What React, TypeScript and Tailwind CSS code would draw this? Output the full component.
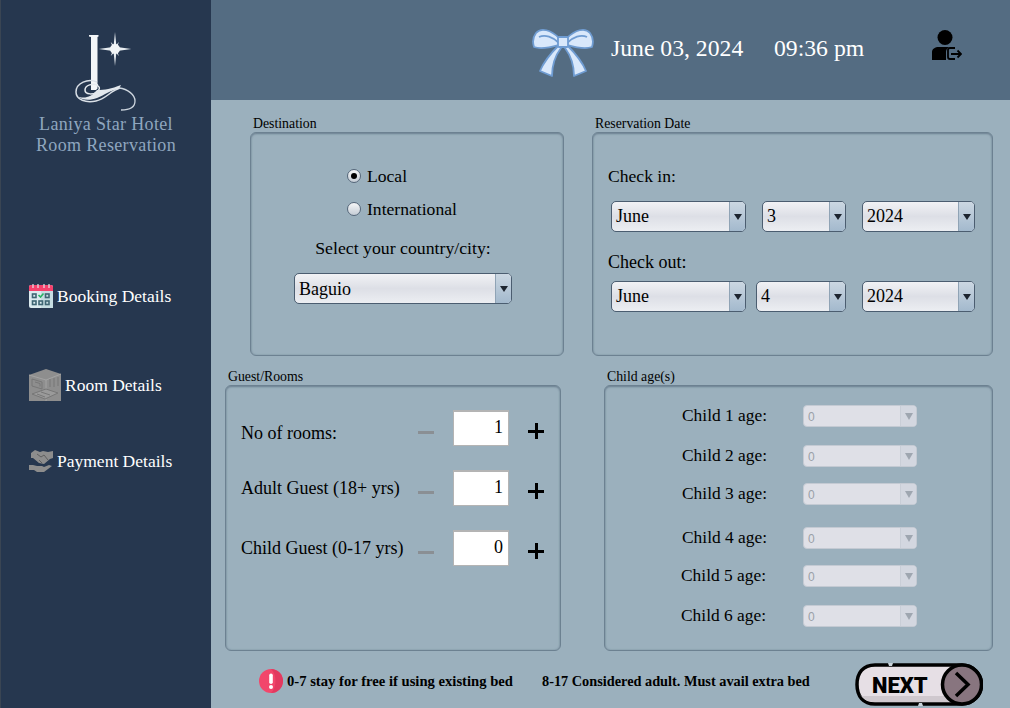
const serif = "font-['Liberation_Serif',serif]"

function LogoMark() {
  return (
    <svg viewBox="72 30 66 84" className="h-[84px] w-[66px]">
      <path d="M88 35h9.500v1.500l-1 .5v51.500l-1.500 1.500h-5V37l-2-.5z" fill="#f4f6f8" />
      <path d="M114 32l1.300 13 2.500-3-1.500 5 14 2-14 2 1.500 5-2.500-3-1.300 13-1.300-13-3 3 2-5-14-2 14-2-2-5 3 3z" fill="#e9eef2" />
      <circle cx="114" cy="49" r="5" fill="#f1f4f6" />
      <path d="M96 82c-9-4-21 1-21 10 0 8 10 11 20 9 10-2 14-10 24-13" fill="none" stroke="#d9dfe6" strokeWidth="1.500" />
      <path d="M97 85c-5-2-13 0-13 5 0 5 9 5 13 1 3-3 1-5-2-6" fill="none" stroke="#e6eaee" strokeWidth="1.500" />
      <path d="M96 90c8 0 14-1 24-5l-2 4c-9 1-14 6-22 9-8 3-16 2-20-2 6 3 14 2 20-6z" fill="#e3e8ed" />
      <path d="M118 88c9 1 16 7 16 13 0 6-5 9-14 9" fill="none" stroke="#cdd5de" strokeWidth="1.300" />
    </svg>
  )
}

function CalendarIcon() {
  return (
    <svg viewBox="0 0 24 24" className="h-6 w-6 shrink-0">
      <rect x="0" y="1" width="24" height="23" rx="2" fill="#dcebef" />
      <rect x="12" y="6" width="12" height="18" fill="#c6dde2" />
      <path d="M0 7V3a2 2 0 0 1 2-2h20a2 2 0 0 1 2 2v4z" fill="#f6416c" />
      <path d="M4 0v4M9 0v4M15 0v4M20 0v4" stroke="#e3e6ea" strokeWidth="1.200" />
      <g fill="none" stroke="#3f6674" strokeWidth="1.600">
        <rect x="3.500" y="10" width="3.500" height="3.500" />
        <rect x="16.500" y="10" width="3.500" height="3.500" />
        <rect x="3.500" y="17" width="3.500" height="3.500" />
        <rect x="10" y="17" width="3.500" height="3.500" />
        <rect x="16.500" y="17" width="3.500" height="3.500" />
      </g>
      <path d="M9.500 11l2 2 3-3.500" fill="none" stroke="#28b463" strokeWidth="1.600" />
    </svg>
  )
}

function RoomIcon() {
  return (
    <svg viewBox="0 0 32 32" className="h-8 w-8 shrink-0">
      <path d="M0 6l17-6 15 5v27H0z" fill="#8e8e8e" />
      <path d="M0 6l17 5v21M17 11l15-6" fill="none" stroke="#a3a3a3" strokeWidth="1" />
      <path d="M3 10l10 3v7l-10-3zM6 13l5 1.500v3" fill="none" stroke="#777" strokeWidth="1" />
      <path d="M3 25l14-5 12 4-13 6z" fill="#9a9a9a" stroke="#777" strokeWidth="1" />
      <path d="M8 25l8 3M12 23l9 3M21 10v8M25 9v9M29 8v9" fill="none" stroke="#777" strokeWidth="1" />
    </svg>
  )
}

function DealIcon() {
  return (
    <svg viewBox="0 0 24 24" className="h-6 w-6 shrink-0">
      <path d="M2 4l4-3 5 2 3-1 5 1 5-1v7l-3 1-6 5-5-1-6-5-2 0z" fill="#8d8d8d" />
      <path d="M8 5l4 3 3-2 4 5M10 11l3 3" fill="none" stroke="#5f5f5f" strokeWidth="1" />
      <path d="M0 16h4l4 1h5l2 1 5-2 3 1-8 6H8l-3-2H0z" fill="#8d8d8d" />
    </svg>
  )
}

function BowIcon() {
  return (
    <svg viewBox="-1 -1 62 51" className="h-[51px] w-[62px]">
      <g fill="#d9e8fb" stroke="#6f9cd2" strokeWidth="1.800" strokeLinejoin="round">
        <path d="M26 17C19 24 11 33 7 43l12 5c0-10 3-20 9-28z" />
        <path d="M34 17c7 7 15 16 19 26l-12 5c0-10-3-20-9-28z" />
        <path d="M26 10C18 2 8-1 3 5 0 9-1 13 1 19c8 3 18 0 25-2z" />
        <path d="M34 10c8-8 18-11 23-5 3 4 4 8 2 14-8 3-18 0-25-2z" />
        <path d="M6 9c6-3 14 0 20 6M54 9c-6-3-14 0-20 6" fill="none" />
        <rect x="25" y="9" width="10" height="10" rx="1" />
      </g>
    </svg>
  )
}

function LogoutUserIcon() {
  return (
    <svg viewBox="0 0 30 31" className="h-[31px] w-[30px]">
      <circle cx="13" cy="8.500" r="7.500" fill="#000" />
      <path d="M0 31v-8c0-3 3-5 7-5h10c-2 1-3 3-3 5v8H2z" fill="#000" />
      <path d="M23 19h-5a2 2 0 0 0-2 2v7a2 2 0 0 0 2 2h5" fill="none" stroke="#000" strokeWidth="1.800" />
      <path d="M19 25h10M25.500 21.500L29 25l-3.500 3.500" fill="none" stroke="#000" strokeWidth="1.800" />
    </svg>
  )
}

function AlertIcon() {
  return (
    <svg viewBox="0 0 24 24" className="h-6 w-6 shrink-0">
      <circle cx="12" cy="12" r="12" fill="#f2466b" />
      <path d="M12 24a12 12 0 0 0 0-24c6 5 6 19 0 24z" fill="#e2395f" />
      <rect x="10.200" y="4.500" width="3.600" height="10.500" rx="1.800" fill="#fff" />
      <circle cx="12" cy="18" r="2" fill="#fff" />
    </svg>
  )
}

function NextButton() {
  return (
    <svg viewBox="0 0 128 43" className="h-[43px] w-32">
      <path d="M20 2h87a19.500 19.500 0 0 1 0 39H20C8 41 2 33 2 21.500S8 2 20 2z" fill="#e6dfe5" stroke="#000" strokeWidth="3.500" />
      <path d="M5 31c3 6 9 8 15 8h75v-6H6z" fill="#cfc8ce" />
      <circle cx="107" cy="21.500" r="19.500" fill="#88757f" stroke="#000" strokeWidth="3.500" />
      <path d="M101 10l12 11.500L101 33" fill="none" stroke="#000" strokeWidth="3.500" />
      <path d="M33 0h5l-1 3h-3zM63 43h5l-1-3h-3z" fill="#c9d3da" />
      <text x="17" y="30" fontFamily="Roboto, sans-serif" fontWeight="900" fontSize="22">
        NEXT
      </text>
    </svg>
  )
}

function Combo({ value, className, textClass = 'leading-[30px]' }: { value: string; className: string; textClass?: string }) {
  return (
    <div className={`flex h-[31px] overflow-hidden rounded-[5px] border border-[#4b5d70] bg-gradient-to-b from-[#f1f2f5] via-[#dddfe6] to-[#eceef2] ${className}`}>
      <span className={`flex-1 pl-1 text-[18px] text-black ${textClass}`}>{value}</span>
      <span className="flex w-4 items-center justify-center border-l border-[#8fa3b5] bg-gradient-to-b from-[#cbd7e2] to-[#a3b9cd]">
        <span className="h-0 w-0 border-x-[4px] border-t-[6px] border-x-transparent border-t-[#1d2530]" />
      </span>
    </div>
  )
}

function DisabledCombo() {
  return (
    <div className="flex h-[22px] w-[114px] overflow-hidden rounded-[4px] border border-[#c4cad3] bg-[#dfe0e7]">
      <span className="flex-1 pl-1 font-['Liberation_Sans',sans-serif] text-xs leading-[22px] text-[#9aa0a8]">0</span>
      <span className="flex w-4 items-center justify-center border-l border-[#c9ced7] bg-[#d3d7e0]">
        <span className="h-0 w-0 border-x-[4px] border-t-[7px] border-x-transparent border-t-[#9ea6b0]" />
      </span>
    </div>
  )
}

function Radio({ label, checked }: { label: string; checked?: boolean }) {
  return (
    <div className="flex h-[18px] items-center">
      <span className="flex h-3.5 w-3.5 items-center justify-center rounded-full border border-[#56677a] bg-gradient-to-b from-[#f6f7f8] to-[#c5cdd6]">
        {checked && <span className="h-1.5 w-1.5 rounded-full bg-black" />}
      </span>
      <span className="ml-1.5 pt-px text-[17.6px] text-black">{label}</span>
    </div>
  )
}

function Panel({ title, className, children }: { title: string; className: string; children: React.ReactNode }) {
  return (
    <section className={`flex flex-col ${className}`}>
      <p className="h-[18px] pl-[3px] text-[13.8px] leading-[20px] text-black">{title}</p>
      <div className="flex-1 rounded-[6px] border border-[#6c8191] bg-[#9bb0bd] shadow-[inset_0_1px_2px_#6c8191,inset_0_0_2px_#7d93a2]">
        {children}
      </div>
    </section>
  )
}

const guestRows = [
  { label: 'No of rooms:', value: '1', labelClass: 'mt-[13px]' },
  { label: 'Adult Guest (18+ yrs)', value: '1', labelClass: 'mt-[8px]' },
  { label: 'Child Guest (0-17 yrs)', value: '0', labelClass: 'mt-[8px]' },
]

const childRows = [
  { label: 'Child 1 age:', rowClass: 'mt-[19px]', labelClass: 'w-[121px]' },
  { label: 'Child 2 age:', rowClass: 'mt-[18px]', labelClass: 'w-[121px]' },
  { label: 'Child 3 age:', rowClass: 'mt-[16px]', labelClass: 'w-[121px]' },
  { label: 'Child 4 age:', rowClass: 'mt-[22px]', labelClass: 'w-[121px]' },
  { label: 'Child 5 age:', rowClass: 'mt-[16px]', labelClass: '-ml-px w-[122px]' },
  { label: 'Child 6 age:', rowClass: 'mt-[18px]', labelClass: '-ml-px w-[122px]' },
]

export default function App() {
  return (
    <div className={`flex h-[708px] w-[1010px] overflow-hidden bg-[#9bb0bd] ${serif}`}>
      {/* Sidebar */}
      <aside className="flex w-[211px] shrink-0 flex-col border-l border-[#3a4553] bg-[#26374f]">
        <div className="flex flex-col items-center pt-[30px]">
          <LogoMark />
          <p className="text-center text-[18px] leading-[21px] tracking-[0.35px] text-[#8fa6bf]">
            Laniya Star Hotel
            <br />
            Room Reservation
          </p>
        </div>
        <nav className="mt-[128px] pl-7 text-[17.5px] text-white">
          <div className="flex h-6 items-center gap-1">
            <CalendarIcon />
            <span className="pt-px">Booking Details</span>
          </div>
          <div className="mt-[61px] flex h-8 items-center gap-1">
            <RoomIcon />
            <span className="pt-px">Room Details</span>
          </div>
          <div className="mt-[48px] flex h-6 items-center gap-1">
            <DealIcon />
            <span className="pt-px">Payment Details</span>
          </div>
        </nav>
      </aside>

      <main className="flex flex-1 flex-col">
        {/* Header */}
        <header className="flex h-[100px] shrink-0 items-start bg-[#546c82] pl-[321px] text-[23.7px] text-white">
          <div className="mt-[27px]">
            <BowIcon />
          </div>
          <span className="ml-[17px] mt-[35px] w-[133px] whitespace-nowrap leading-[27px]">June 03, 2024</span>
          <span className="ml-[30px] mt-[35px] w-[90px] whitespace-nowrap leading-[27px]">09:36 pm</span>
          <div className="ml-[68px] mt-[29px]">
            <LogoutUserIcon />
          </div>
        </header>

        {/* Destination + dates */}
        <div className="mt-[14px] flex h-[242px] pl-[39px]">
          <Panel title="Destination" className="w-[314px]">
            <div className="pl-[96px] pt-[34px]">
              <Radio label="Local" checked />
              <div className="mt-[15px]">
                <Radio label="International" />
              </div>
            </div>
            <p className="mt-[20px] pr-2 text-center text-[17.75px] leading-5 text-black">Select your country/city:</p>
            <div className="ml-[43px] mt-[15px]">
              <Combo value="Baguio" className="w-[218px]" />
            </div>
          </Panel>

          <Panel title="Reservation Date" className="ml-[28px] w-[401px]">
            <div className="pl-[15px] pt-[33px]">
              <p className="text-[17.6px] leading-5 text-black">Check in:</p>
              <div className="ml-[3px] mt-[15px] flex">
                <Combo value="June" className="w-[135px]" textClass="leading-[28px]" />
                <Combo value="3" className="ml-[16px] w-[84px]" textClass="leading-[28px]" />
                <Combo value="2024" className="ml-[16px] w-[113px]" textClass="leading-[28px]" />
              </div>
              <p className="mt-[20px] text-[18px] leading-5 text-black">Check out:</p>
              <div className="ml-[3px] mt-[9px] flex">
                <Combo value="June" className="w-[135px]" textClass="leading-[28px]" />
                <Combo value="4" className="ml-[10px] w-[90px]" textClass="leading-[28px]" />
                <Combo value="2024" className="ml-[16px] w-[113px]" textClass="leading-[28px]" />
              </div>
            </div>
          </Panel>
        </div>

        {/* Guests + child ages */}
        <div className="mt-[11px] flex h-[284px] pl-[14px]">
          <Panel title="Guest/Rooms" className="w-[336px]">
            <div className="pl-[15px]">
              {guestRows.map((row) => (
                <div key={row.label} className="mt-6 flex h-9 items-start">
                  <span className={`w-[177px] text-[18px] leading-5 text-black ${row.labelClass}`}>{row.label}</span>
                  <span className="mt-[21px] h-[3px] w-4 bg-[#8a8f94]" />
                  <span className="ml-[19px] h-9 w-14 border border-t-2 border-[#b4b4b4] bg-white pr-[5px] text-right text-[18px] leading-[30px] text-black">
                    {row.value}
                  </span>
                  <span className="relative ml-[19px] mt-[13px] h-4 w-4">
                    <span className="absolute left-0 top-[6.5px] h-[3px] w-4 bg-black" />
                    <span className="absolute left-[6.5px] top-0 h-4 w-[3px] bg-black" />
                  </span>
                </div>
              ))}
            </div>
          </Panel>

          <Panel title="Child age(s)" className="ml-[43px] w-[389px]">
            <div className="pl-[77px]">
              {childRows.map((row) => (
                <div key={row.label} className={`flex h-[22px] items-center ${row.rowClass}`}>
                  <span className={`pb-[2px] text-[17.4px] leading-5 text-black ${row.labelClass}`}>{row.label}</span>
                  <DisabledCombo />
                </div>
              ))}
            </div>
          </Panel>
        </div>

        {/* Footer */}
        <footer className="flex flex-1 items-start pl-[48px]">
          <div className="mt-[18px]">
            <AlertIcon />
          </div>
          <span className="ml-1 mt-[21px] w-[226px] whitespace-nowrap text-[14.65px] font-bold leading-[18px] text-black">0-7 stay for free if using existing bed</span>
          <span className="ml-[29px] mt-[21px] w-[267px] whitespace-nowrap text-[14.3px] font-bold leading-[18px] text-black">8-17 Considered adult. Must avail extra bed</span>
          <div className="ml-[46px] mt-[12px]">
            <NextButton />
          </div>
        </footer>
      </main>
    </div>
  )
}
